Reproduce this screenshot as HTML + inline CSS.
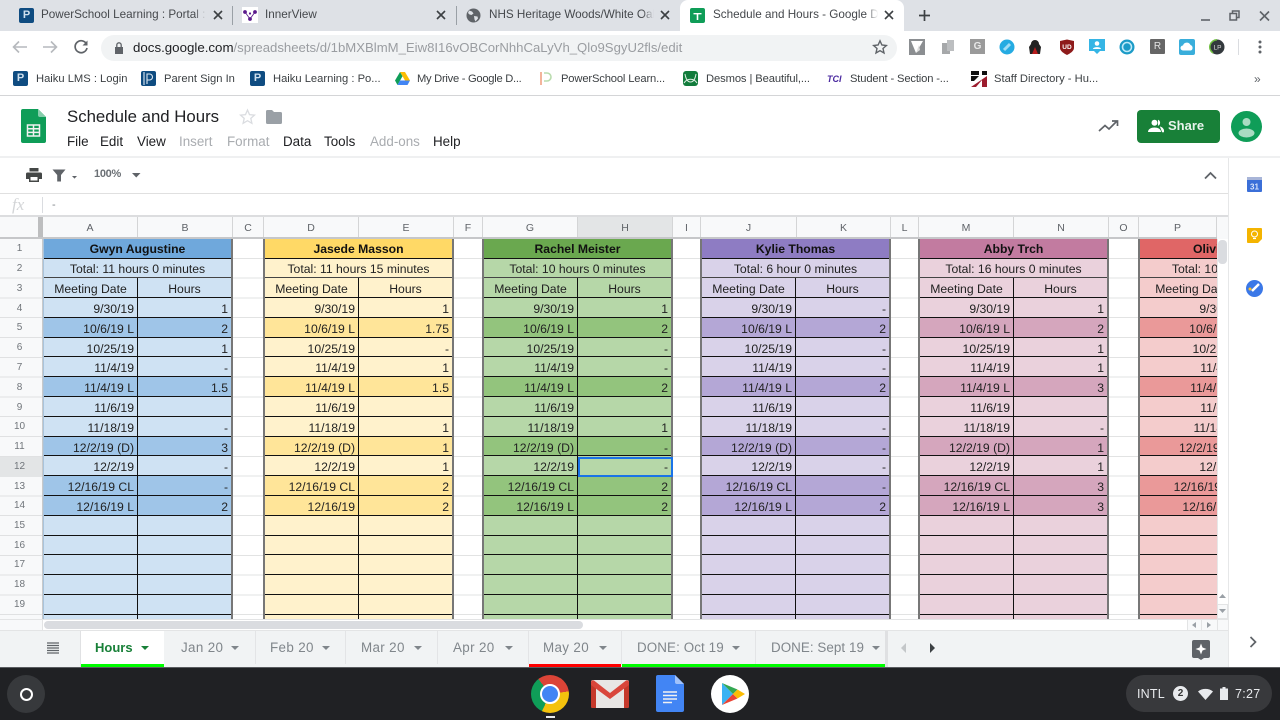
<!DOCTYPE html>
<html><head><meta charset="utf-8"><title>Schedule and Hours</title>
<style>
*{box-sizing:border-box}
html,body{margin:0;padding:0;width:1280px;height:720px;overflow:hidden;background:#fff;font-family:"Liberation Sans",sans-serif;color:#222}
.a{position:absolute}
.t{position:absolute;white-space:nowrap;line-height:16px}
svg{position:absolute;display:block}
.tab{font-size:11.7px;color:#45484c;top:7px;overflow:hidden;-webkit-mask-image:linear-gradient(to right,#000 93%,transparent)}
.x{position:absolute;top:7px;width:16px;height:16px}
.bm{font-size:11.2px;color:#3c4043;top:71px}
.mn{font-size:13.4px;top:134px;color:#202124}
.off{color:#a9acb0}
.ch{position:absolute;top:217px;height:22px;font-size:10.5px;line-height:23px;text-align:center;color:#5f6368;border-right:1px solid #d4d5d6;background:#f8f9fa}
.rh{position:absolute;left:0;width:39px;font-size:10px;line-height:20px;height:20px;text-align:center;color:#70757a}
.g{position:absolute;top:0;width:191px;display:grid;grid-template-columns:94px 93px;grid-template-rows:19.5px repeat(19,19.8px);font-size:12.2px;color:#222;border-left:2px solid #777;border-right:2px solid #777}
.g>span{display:block;padding:0 3px 0 0;line-height:22px;text-align:right;white-space:nowrap;overflow:hidden;border-bottom:1px solid #111;background:var(--l)}
.g>span:nth-child(odd){border-right:1px solid #111}
.g>span:nth-child(1){grid-column:span 2;background:var(--h);text-align:center;font-weight:bold;color:#111;border-right:0;padding:0;line-height:20px}
.g>span:nth-child(2){grid-column:span 2;text-align:center;padding:0;border-bottom:1px solid #444;line-height:21px}
.g>span:nth-child(3),.g>span:nth-child(4){text-align:center;padding:0}
.g>span:nth-child(3){border-right:1px solid #111}
.g>span:nth-child(7),.g>span:nth-child(8),.g>span:nth-child(13),.g>span:nth-child(14),.g>span:nth-child(19),.g>span:nth-child(20),.g>span:nth-child(23),.g>span:nth-child(24),.g>span:nth-child(25),.g>span:nth-child(26){background:var(--d)}
.g.p{width:204px;grid-template-columns:104px 96px}
.g.p>span:nth-child(1){text-align:left;padding-left:53px}
.st{position:absolute;top:640px;font-size:13.4px;line-height:16px;color:#80868b;letter-spacing:.35px;white-space:nowrap}
.ar{position:absolute;top:646px;width:0;height:0;border-left:4px solid transparent;border-right:4px solid transparent;border-top:4px solid #80868b}
.dv{position:absolute;top:631px;height:33px;width:1px;background:#e3e4e6}
.ext{position:absolute;top:39px;width:16px;height:16px}
</style></head><body>

<!-- Tab strip -->
<div class="a" style="left:0;top:0;width:1280px;height:31px;background:#dee1e6"></div>
<div class="a" style="left:680px;top:0;width:224px;height:32px;background:#fff;border-radius:8px 8px 0 0"></div>
<div class="a" style="left:232px;top:6px;width:1px;height:19px;background:#9aa0a6"></div>
<div class="a" style="left:456px;top:6px;width:1px;height:19px;background:#9aa0a6"></div>

<div class="a" style="left:19px;top:8px;width:15px;height:15px;background:#0f4c81;border-radius:2px;color:#cfe0ee;font:bold 11px/15px 'Liberation Sans',sans-serif;text-align:center">P</div>
<div class="t tab" style="left:41px;width:165px">PowerSchool Learning : Portal : Haiku</div>
<svg class="x" style="left:210px" viewBox="0 0 16 16"><path d="M4 4l8 8M12 4l-8 8" stroke="#3c4043" stroke-width="1.6"/></svg>

<div class="a" style="left:242px;top:7px;width:16px;height:16px;background:#fff"></div>
<svg style="left:242px;top:7px" width="16" height="16" viewBox="0 0 16 16"><g fill="#5b1a8c"><circle cx="3" cy="5" r="1.9"/><circle cx="13" cy="5" r="1.9"/><circle cx="8" cy="12" r="1.9"/><circle cx="8" cy="6.5" r="1.1"/></g><path d="M3 5l5 7 5-7" stroke="#5b1a8c" stroke-width=".8" fill="none"/></svg>
<div class="t tab" style="left:265px;width:160px">InnerView</div>
<svg class="x" style="left:433px" viewBox="0 0 16 16"><path d="M4 4l8 8M12 4l-8 8" stroke="#3c4043" stroke-width="1.6"/></svg>

<svg style="left:466px;top:8px" width="15" height="15" viewBox="0 0 15 15"><circle cx="7.5" cy="7.5" r="7" fill="#5f6368"/><path d="M3 2.5l3 1 1.5 2-2 1.5-2-.5-1.5-1.5zM8 8l3.5 .5 .5 2-2.5 3-1-2z" fill="#dee1e6"/></svg>
<div class="t tab" style="left:489px;width:165px">NHS Heritage Woods/White Oak</div>
<svg class="x" style="left:657px" viewBox="0 0 16 16"><path d="M4 4l8 8M12 4l-8 8" stroke="#3c4043" stroke-width="1.6"/></svg>

<div class="a" style="left:690px;top:8px;width:15px;height:15px;background:#0f9d58;border-radius:2px"></div>
<svg style="left:690px;top:8px" width="15" height="15" viewBox="0 0 15 15"><path d="M3.5 5h8v1.4h-8zM6.700 5h1.600v7H6.700z" fill="#fff"/></svg>
<div class="t tab" style="left:713px;width:165px">Schedule and Hours - Google Drive</div>
<svg class="x" style="left:881px" viewBox="0 0 16 16"><path d="M4 4l8 8M12 4l-8 8" stroke="#3c4043" stroke-width="1.6"/></svg>

<svg style="left:917px;top:8px" width="15" height="15" viewBox="0 0 15 15"><path d="M7.5 2v11M2 7.5h11" stroke="#3c4043" stroke-width="1.7"/></svg>
<svg style="left:1197px;top:8px" width="76" height="16" viewBox="0 0 76 16"><path d="M4 12h9" stroke="#5f6368" stroke-width="1.6"/><path d="M33 5.5h6.5v6.5H33z" fill="none" stroke="#5f6368" stroke-width="1.5"/><path d="M35.5 5V3h6.5v6.5h-2" fill="none" stroke="#5f6368" stroke-width="1.5"/><path d="M63 3.5l9 9M72 3.5l-9 9" stroke="#5f6368" stroke-width="1.6"/></svg>

<!-- Address bar -->
<svg style="left:10px;top:38px" width="82" height="18" viewBox="0 0 82 18"><path d="M17 9H4M9 3.5L3.5 9 9 14.5" fill="none" stroke="#b6b9bd" stroke-width="1.6"/><path d="M33 9h13M41 3.5L46.500 9 41 14.500" fill="none" stroke="#b6b9bd" stroke-width="1.600"/><path d="M76.500 6A6 6 0 1 0 77 10" fill="none" stroke="#5f6368" stroke-width="1.700"/><path d="M77.500 2.500v5h-5z" fill="#5f6368"/></svg>
<div class="a" style="left:101px;top:35px;width:796px;height:26px;background:#f1f3f4;border-radius:13px"></div>
<svg style="left:113px;top:41px" width="12" height="14" viewBox="0 0 12 14"><path d="M2 6h8v7H2z" fill="#5f6368"/><path d="M3.800 6V4a2.200 2.200 0 0 1 4.400 0v2" fill="none" stroke="#5f6368" stroke-width="1.300"/></svg>
<div class="t" style="left:133px;top:40px;font-size:13.300px;color:#9a9da1"><span style="color:#202124">docs.google.com</span><span style="font-size:13.150px">/spreadsheets/d/1bMXBlmM_Eiw8I16vOBCorNhhCaLyVh_Qlo9SgyU2fls/edit</span></div>
<svg style="left:872px;top:39px" width="16" height="16" viewBox="0 0 16 16"><path d="M8 1.800l1.900 4.200 4.500.5-3.400 3 1 4.500L8 11.700 4 14l1-4.500-3.400-3 4.500-.5z" fill="none" stroke="#5f6368" stroke-width="1.400"/></svg>

<!-- extensions -->
<svg class="ext" style="left:909px" viewBox="0 0 16 16"><path d="M0 0h16v16H0z" fill="#8b8e91"/><path d="M2 2h12L7 14z" fill="#fff"/><path d="M7 14l3-8 1 5z" fill="#ddd"/></svg>
<svg class="ext" style="left:940px" viewBox="0 0 16 16"><path d="M2 4h8v11H2z" fill="#a6a8aa"/><path d="M7 1h7v11H7z" fill="#bcbec0"/></svg>
<div class="a" style="left:970px;top:39px;width:15px;height:15px;background:#9a9a9a;color:#e8e8e8;font:bold 10px/15px 'Liberation Sans',sans-serif;text-align:center">G</div>
<svg class="ext" style="left:999px" viewBox="0 0 16 16"><circle cx="8" cy="8" r="7.500" fill="#25abe2"/><path d="M5 11l6-6" stroke="#9fdcf5" stroke-width="3"/></svg>
<svg class="ext" style="left:1027px" viewBox="0 0 16 16"><path d="M4 5a4 4 0 0 1 8 0l2 3-1 7H3L2 8z" fill="#222"/><path d="M8 8l3 7H5z" fill="#b71c1c"/></svg>
<svg class="ext" style="left:1059px" viewBox="0 0 16 16"><path d="M1 2l7-1.500L15 2v7c0 3-4 5.500-7 7-3-1.500-7-4-7-7z" fill="#8e1b1b"/><text x="8" y="10" font-size="6.500" font-weight="bold" text-anchor="middle" fill="#fff" font-family="Liberation Sans">UD</text></svg>
<svg class="ext" style="left:1089px" viewBox="0 0 16 16"><path d="M0 0h16v12h-5l-3 3-3-3H0z" fill="#35b5e5"/><circle cx="8" cy="4.500" r="2.300" fill="#fff"/><path d="M4 10c0-2.500 8-2.500 8 0z" fill="#fff"/></svg>
<svg class="ext" style="left:1119px" viewBox="0 0 16 16"><circle cx="8" cy="8" r="7.500" fill="#1c9bc7"/><circle cx="8" cy="8" r="4.500" fill="none" stroke="#bfeaf8" stroke-width="1.600"/></svg>
<div class="a" style="left:1150px;top:39px;width:15px;height:15px;background:#666;color:#e4e4e4;font:10px/15px 'Liberation Sans',sans-serif;text-align:center;border-radius:1px">R</div>
<svg class="ext" style="left:1179px" viewBox="0 0 16 16"><rect width="16" height="16" rx="2" fill="#39aedb"/><path d="M4 11.500a2.500 2.500 0 0 1 0-5 4 4 0 0 1 7.500-.5 3 3 0 0 1 .5 5.500z" fill="#fff"/></svg>
<svg class="ext" style="left:1209px" viewBox="0 0 16 16"><circle cx="8" cy="8" r="7.500" fill="#33393d"/><path d="M8 .8A7.200 7.200 0 0 0 4 14" fill="none" stroke="#6fbf3f" stroke-width="1.500"/><text x="8.500" y="10.500" font-size="6.500" text-anchor="middle" fill="#ddd" font-family="Liberation Sans">LP</text></svg>
<div class="a" style="left:1238px;top:39px;width:1px;height:16px;background:#dadce0"></div>
<svg style="left:1258px;top:40px" width="4" height="14" viewBox="0 0 4 14"><g fill="#5f6368"><circle cx="2" cy="2" r="1.500"/><circle cx="2" cy="7" r="1.500"/><circle cx="2" cy="12" r="1.500"/></g></svg>

<!-- Bookmarks -->
<div class="a" style="left:13px;top:71px;width:15px;height:15px;background:#0f4c81;border-radius:2px;color:#cfe0ee;font:bold 11px/15px 'Liberation Sans',sans-serif;text-align:center">P</div>
<div class="t bm" style="left:36px">Haiku LMS : Login</div>
<div class="a" style="left:141px;top:71px;width:15px;height:15px;background:#0f4c81;border-radius:2px"></div>
<svg style="left:141px;top:71px" width="15" height="15" viewBox="0 0 15 15"><path d="M3 1v13M6 3h2.500a3 3 0 0 1 0 6H6zM6 3v10" fill="none" stroke="#dfeaf3" stroke-width="1.100"/></svg>
<div class="t bm" style="left:164px">Parent Sign In</div>
<div class="a" style="left:250px;top:71px;width:15px;height:15px;background:#0f4c81;border-radius:2px;color:#cfe0ee;font:bold 11px/15px 'Liberation Sans',sans-serif;text-align:center">P</div>
<div class="t bm" style="left:273px">Haiku Learning : Po...</div>
<svg style="left:395px;top:72px" width="15" height="13" viewBox="0 0 15 13"><path d="M5 0h5l5 8.500h-5z" fill="#fbbc04"/><path d="M5 0l2.500 4.300L2.500 13 0 8.500z" fill="#0f9d58"/><path d="M2.500 13l2.500-4.500h10L12.500 13z" fill="#4285f4"/></svg>
<div class="t bm" style="left:417px;letter-spacing:-.28px">My Drive - Google D...</div>
<svg style="left:539px;top:71px" width="14" height="15" viewBox="0 0 14 15"><path d="M2 1v13" stroke="#f3b49c" stroke-width="2"/><path d="M5 2h3a4 4 0 0 1 0 8H5" fill="none" stroke="#b9dcae" stroke-width="1.600"/></svg>
<div class="t bm" style="left:561px;letter-spacing:-.15px">PowerSchool Learn...</div>
<svg style="left:683px;top:71px" width="15" height="15" viewBox="0 0 15 15"><rect width="15" height="15" rx="3" fill="#127c3c"/><path d="M2 3c1 6 3 8 5.500 8S12 9 13 3M1 12c3-5 10-5 13 0" fill="none" stroke="#dff0e3" stroke-width="1"/></svg>
<div class="t bm" style="left:706px;letter-spacing:-.1px">Desmos | Beautiful,...</div>
<div class="t" style="left:827px;top:71px;font:italic bold 9px/16px 'Liberation Sans',sans-serif;color:#4b2aa0">TCI</div>
<div class="t bm" style="left:850px;letter-spacing:-.15px">Student - Section -...</div>
<svg style="left:971px;top:71px" width="16" height="16" viewBox="0 0 16 16"><path d="M0 0h8v4H0zM11 0h5v4h-5z" fill="#111"/><path d="M16 5v11h-5V9L5 16H0z" fill="#9c1c2e"/><path d="M0 5h8L3 10H0z" fill="#111"/></svg>
<div class="t bm" style="left:994px">Staff Directory - Hu...</div>
<div class="t" style="left:1254px;top:71px;font-size:12px;color:#5f6368">»</div>
<div class="a" style="left:0;top:95px;width:1280px;height:1px;background:#d4d5d7"></div>

<!-- Docs header -->
<svg style="left:21px;top:109px" width="25" height="34" viewBox="0 0 25 34"><path d="M2 0h15l8 8v24a2 2 0 0 1-2 2H2a2 2 0 0 1-2-2V2a2 2 0 0 1 2-2z" fill="#0f9d58"/><path d="M17 0l8 8h-6a2 2 0 0 1-2-2z" fill="#87ceac"/><path d="M6.500 16h12v11h-12zM6.500 19.700h12M6.500 23.400h12M12.500 16v11" fill="none" stroke="#f1f1f1" stroke-width="1.500"/></svg>
<div class="t" style="left:67px;top:108px;font-size:16.800px;line-height:18px;color:#202124">Schedule and Hours</div>
<svg style="left:239px;top:108px" width="17" height="17" viewBox="0 0 17 17"><path d="M8.500 2l2 4.600 5 .5-3.700 3.300 1.100 4.900-4.400-2.600-4.400 2.600 1.100-4.900L1.500 7.100l5-.5z" fill="none" stroke="#dadce0" stroke-width="1.300"/></svg>
<svg style="left:266px;top:110px" width="16" height="14" viewBox="0 0 16 14"><path d="M0 1.500A1.500 1.500 0 0 1 1.500 0h4.500l2 2h6.500A1.500 1.500 0 0 1 16 3.500V12.500a1.500 1.500 0 0 1-1.500 1.500h-13A1.500 1.500 0 0 1 0 12.500z" fill="#9aa0a6"/></svg>
<div class="t mn" style="left:67px">File</div>
<div class="t mn" style="left:100px">Edit</div>
<div class="t mn" style="left:137px">View</div>
<div class="t mn off" style="left:179px">Insert</div>
<div class="t mn off" style="left:227px">Format</div>
<div class="t mn" style="left:283px">Data</div>
<div class="t mn" style="left:324px">Tools</div>
<div class="t mn off" style="left:370px">Add-ons</div>
<div class="t mn" style="left:433px">Help</div>

<svg style="left:1098px;top:119px" width="21" height="15" viewBox="0 0 21 15"><path d="M1 12l6-5.500 4 3.500 8-8M14 2h5.500v5" fill="none" stroke="#5f6368" stroke-width="1.700"/></svg>
<div class="a" style="left:1137px;top:110px;width:83px;height:33px;background:#188038;border-radius:4px"></div>
<svg style="left:1148px;top:119px" width="16" height="14" viewBox="0 0 16 14"><circle cx="6.500" cy="3.700" r="3" fill="#fff"/><path d="M0 13c0-6 13-6 13 0z" fill="#fff"/><path d="M10 1a3 3 0 0 1 0 5.500M12 7.800c2 .5 4 2 4 5.200h-2" fill="#fff" stroke="#fff" stroke-width=".6"/></svg>
<div class="t" style="left:1168px;top:118px;font-size:13px;font-weight:bold;color:#e8f3ec">Share</div>
<svg style="left:1231px;top:111px" width="31" height="31" viewBox="0 0 31 31"><circle cx="15.500" cy="15.500" r="15.500" fill="#0f9d58"/><circle cx="15.500" cy="11" r="4" fill="#a9dcc2"/><ellipse cx="15.500" cy="22" rx="8" ry="4.500" fill="#a9dcc2"/></svg>

<div class="a" style="left:0;top:156px;width:1280px;height:2px;background:#eff0f1"></div>

<!-- Toolbar -->
<svg style="left:26px;top:168px" width="16" height="14" viewBox="0 0 16 14"><path d="M3.500 0h9v3.500h-9zM1.500 4.500h13A1.500 1.500 0 0 1 16 6v5h-3v3H3v-3H0V6a1.500 1.500 0 0 1 1.500-1.500z" fill="#444746"/><path d="M4.500 9h7v3.500h-7z" fill="#fff"/></svg>
<svg style="left:52px;top:169px" width="28" height="13" viewBox="0 0 28 13"><path d="M.5 .5h13L9 6v6.500H5.200V6z" fill="#5f6368"/><path d="M20 7h5l-2.500 2.600z" fill="#5f6368"/></svg>
<div class="t" style="left:94px;top:166px;font-size:11px;font-weight:bold;color:#6b7075;letter-spacing:-.3px">100%</div>
<svg style="left:132px;top:173px" width="9" height="5" viewBox="0 0 9 5"><path d="M0 0h8.500L4.250 4.500z" fill="#5f6368"/></svg>
<svg style="left:1204px;top:171px" width="13" height="9" viewBox="0 0 13 9"><path d="M1 7.500l5.500-5.500 5.500 5.500" fill="none" stroke="#5f6368" stroke-width="1.800"/></svg>

<div class="a" style="left:0;top:193px;width:1228px;height:1px;background:#e0e0e0"></div>
<div class="t" style="left:12px;top:197px;font:italic 17px/16px 'Liberation Serif',serif;color:#d3d5d7">fx</div>
<div class="a" style="left:42px;top:197px;width:1px;height:16px;background:#dadce0"></div>
<div class="t" style="left:52px;top:197px;font-size:11px;color:#80868b">-</div>
<div class="a" style="left:0;top:215px;width:1228px;height:2px;background:#dcdddf"></div>

<!-- Column headers -->
<div class="a" style="left:0;top:217px;width:1228px;height:22px;background:#f8f9fa"></div>
<div class="ch" style="left:43px;width:95px">A</div>
<div class="ch" style="left:138px;width:95px">B</div>
<div class="ch" style="left:233px;width:31px">C</div>
<div class="ch" style="left:264px;width:95px">D</div>
<div class="ch" style="left:359px;width:95px">E</div>
<div class="ch" style="left:454px;width:29px">F</div>
<div class="ch" style="left:483px;width:95px">G</div>
<div class="ch" style="left:578px;width:95px;background:#e3e5e6">H</div>
<div class="ch" style="left:673px;width:28px">I</div>
<div class="ch" style="left:701px;width:96px">J</div>
<div class="ch" style="left:797px;width:94px">K</div>
<div class="ch" style="left:891px;width:28px">L</div>
<div class="ch" style="left:919px;width:95px">M</div>
<div class="ch" style="left:1014px;width:95px">N</div>
<div class="ch" style="left:1109px;width:30px">O</div>
<div class="ch" style="left:1139px;width:78px;border-right:1px solid #d4d5d6">P</div>
<div class="a" style="left:38px;top:217px;width:5px;height:22px;background:#bdbebf"></div>
<div class="a" style="left:0;top:237px;width:1217px;height:2px;background:#c6c7c9"></div>

<!-- Row headers -->
<div class="a" style="left:0;top:239px;width:43px;height:380px;background:repeating-linear-gradient(to bottom,#f8f9fa 0,#f8f9fa 18.800px,#e0e1e2 18.800px,#e0e1e2 19.800px);border-right:1px solid #c8c9ca"></div>
<div class="a" style="left:0;top:457px;width:42px;height:19.800px;background:#e3e5e6"></div>
<div class="rh" style="top:239px">1</div>
<div class="rh" style="top:259px">2</div>
<div class="rh" style="top:279px">3</div>
<div class="rh" style="top:299px">4</div>
<div class="rh" style="top:318px">5</div>
<div class="rh" style="top:338px">6</div>
<div class="rh" style="top:358px">7</div>
<div class="rh" style="top:378px">8</div>
<div class="rh" style="top:398px">9</div>
<div class="rh" style="top:417px">10</div>
<div class="rh" style="top:437px">11</div>
<div class="rh" style="top:457px">12</div>
<div class="rh" style="top:477px">13</div>
<div class="rh" style="top:496px">14</div>
<div class="rh" style="top:516px">15</div>
<div class="rh" style="top:536px">16</div>
<div class="rh" style="top:555px">17</div>
<div class="rh" style="top:575px">18</div>
<div class="rh" style="top:595px">19</div>

<!-- Grid -->
<div class="a" style="left:43px;top:239px;width:1174px;height:380px;overflow:hidden;background:repeating-linear-gradient(to bottom,#fff 0,#fff 18.800px,#e2e3e3 18.800px,#e2e3e3 19.800px)">
<div class="g" style="left:-1px;border-left-color:#a9c4dc;--h:#6fa8dc;--l:#cfe2f3;--d:#9fc5e8">
<span>Gwyn Augustine</span><span>Total: 11 hours 0 minutes</span><span>Meeting Date</span><span>Hours</span>
<span>9/30/19</span><span>1</span><span>10/6/19 L</span><span>2</span><span>10/25/19</span><span>1</span><span>11/4/19</span><span>-</span><span>11/4/19 L</span><span>1.5</span><span>11/6/19</span><span></span><span>11/18/19</span><span>-</span><span>12/2/19 (D)</span><span>3</span><span>12/2/19</span><span>-</span><span>12/16/19 CL</span><span>-</span><span>12/16/19 L</span><span>2</span>
<span></span><span></span><span></span><span></span><span></span><span></span><span></span><span></span><span></span><span></span><span></span><span></span>
</div>
<div class="g" style="left:220px;--h:#ffd966;--l:#fff2cc;--d:#ffe599">
<span>Jasede Masson</span><span>Total: 11 hours 15 minutes</span><span>Meeting Date</span><span>Hours</span>
<span>9/30/19</span><span>1</span><span>10/6/19 L</span><span>1.75</span><span>10/25/19</span><span>-</span><span>11/4/19</span><span>1</span><span>11/4/19 L</span><span>1.5</span><span>11/6/19</span><span></span><span>11/18/19</span><span>1</span><span>12/2/19 (D)</span><span>1</span><span>12/2/19</span><span>1</span><span>12/16/19 CL</span><span>2</span><span>12/16/19</span><span>2</span>
<span></span><span></span><span></span><span></span><span></span><span></span><span></span><span></span><span></span><span></span><span></span><span></span>
</div>
<div class="g" style="left:439px;--h:#6aa84f;--l:#b6d7a8;--d:#93c47d">
<span>Rachel Meister</span><span>Total: 10 hours 0 minutes</span><span>Meeting Date</span><span>Hours</span>
<span>9/30/19</span><span>1</span><span>10/6/19 L</span><span>2</span><span>10/25/19</span><span>-</span><span>11/4/19</span><span>-</span><span>11/4/19 L</span><span>2</span><span>11/6/19</span><span></span><span>11/18/19</span><span>1</span><span>12/2/19 (D)</span><span>-</span><span>12/2/19</span><span>-</span><span>12/16/19 CL</span><span>2</span><span>12/16/19 L</span><span>2</span>
<span></span><span></span><span></span><span></span><span></span><span></span><span></span><span></span><span></span><span></span><span></span><span></span>
</div>
<div class="g" style="left:657px;--h:#8e7cc3;--l:#d9d2e9;--d:#b4a7d6">
<span>Kylie Thomas</span><span>Total: 6 hour 0 minutes</span><span>Meeting Date</span><span>Hours</span>
<span>9/30/19</span><span>-</span><span>10/6/19 L</span><span>2</span><span>10/25/19</span><span>-</span><span>11/4/19</span><span>-</span><span>11/4/19 L</span><span>2</span><span>11/6/19</span><span></span><span>11/18/19</span><span>-</span><span>12/2/19 (D)</span><span>-</span><span>12/2/19</span><span>-</span><span>12/16/19 CL</span><span>-</span><span>12/16/19 L</span><span>2</span>
<span></span><span></span><span></span><span></span><span></span><span></span><span></span><span></span><span></span><span></span><span></span><span></span>
</div>
<div class="g" style="left:875px;--h:#c27ba0;--l:#ead1dc;--d:#d5a6bd">
<span>Abby Trch</span><span>Total: 16 hours 0 minutes</span><span>Meeting Date</span><span>Hours</span>
<span>9/30/19</span><span>1</span><span>10/6/19 L</span><span>2</span><span>10/25/19</span><span>1</span><span>11/4/19</span><span>1</span><span>11/4/19 L</span><span>3</span><span>11/6/19</span><span></span><span>11/18/19</span><span>-</span><span>12/2/19 (D)</span><span>1</span><span>12/2/19</span><span>1</span><span>12/16/19 CL</span><span>3</span><span>12/16/19 L</span><span>3</span>
<span></span><span></span><span></span><span></span><span></span><span></span><span></span><span></span><span></span><span></span><span></span><span></span>
</div>
<div class="g p" style="left:1095px;--h:#e06666;--l:#f4cccc;--d:#ea9999">
<span>Olivia</span><span>Total: 10 hours 0 minutes</span><span>Meeting Date</span><span>Hours</span>
<span>9/30/19</span><span>1</span><span>10/6/19 L</span><span>2</span><span>10/25/19</span><span>1</span><span>11/4/19</span><span>1</span><span>11/4/19 L</span><span>2</span><span>11/6/19</span><span></span><span>11/18/19</span><span>1</span><span>12/2/19 (D)</span><span>1</span><span>12/2/19</span><span>1</span><span>12/16/19 CL</span><span>2</span><span>12/16/19 L</span><span>2</span>
<span></span><span></span><span></span><span></span><span></span><span></span><span></span><span></span><span></span><span></span><span></span><span></span>
</div>
</div>
<div class="a" style="left:577.500px;top:456.500px;width:95px;height:20.500px;border:2px solid #1a73e8"></div>

<!-- Vertical scrollbar -->
<div class="a" style="left:1217px;top:239px;width:11px;height:380px;background:#fff;border-left:1px solid #e6e7e8"></div>
<div class="a" style="left:1218px;top:240px;width:9px;height:24px;background:#dadce0;border-radius:4px"></div>
<div class="a" style="left:1217px;top:604px;width:11px;height:15px;background:#f8f9fa;border:1px solid #e3e4e5"></div>
<svg style="left:1219px;top:609px" width="7" height="5" viewBox="0 0 7 5"><path d="M0 0h7L3.500 4z" fill="#9aa0a6"/></svg>
<svg style="left:1219px;top:594px" width="7" height="5" viewBox="0 0 7 5"><path d="M0 4h7L3.500 0z" fill="#9aa0a6"/></svg>

<!-- Horizontal scrollbar -->
<div class="a" style="left:0;top:619px;width:1228px;height:11px;background:#fff;border-top:1px solid #e3e4e5"></div>
<div class="a" style="left:0;top:620px;width:43px;height:10px;background:#f8f9fa;border-right:1px solid #e3e4e5"></div>
<div class="a" style="left:44px;top:621px;width:539px;height:8px;background:#dadce0;border-radius:4px"></div>
<div class="a" style="left:1187px;top:620px;width:41px;height:10px;background:#f8f9fa;border-left:1px solid #e3e4e5"></div>
<div class="a" style="left:1201px;top:620px;width:1px;height:10px;background:#e3e4e5"></div>
<div class="a" style="left:1217px;top:620px;width:1px;height:10px;background:#e3e4e5"></div>
<svg style="left:1192px;top:622px" width="30" height="7" viewBox="0 0 30 7"><path d="M4 0v6L0 3zM15 0v6l4-3z" fill="#9aa0a6"/></svg>

<!-- Right panel -->
<div class="a" style="left:1228px;top:158px;width:1px;height:510px;background:#e6e7e8"></div>
<svg style="left:1247px;top:176px" width="15" height="16" viewBox="0 0 15 16"><rect y="1" width="15" height="15" rx="1" fill="#3b6fd8"/><rect y="1" width="15" height="3" fill="#a8b5d8"/><text x="7.500" y="13.500" font-size="8" font-weight="bold" text-anchor="middle" fill="#d8e4fb" font-family="Liberation Sans">31</text></svg>
<svg style="left:1247px;top:228px" width="15" height="15" viewBox="0 0 15 15"><path d="M1 0h13a1 1 0 0 1 1 1v10l-4 4H1a1 1 0 0 1-1-1V1a1 1 0 0 1 1-1z" fill="#f4b400"/><circle cx="7.500" cy="6" r="3" fill="none" stroke="#fff" stroke-width="1"/><path d="M6 10.500h3" stroke="#fff" stroke-width="1.200"/></svg>
<svg style="left:1246px;top:280px" width="17" height="17" viewBox="0 0 17 17"><circle cx="8.500" cy="8.500" r="8.500" fill="#3b78e7"/><path d="M6 11l7-7" stroke="#fff" stroke-width="2.500"/><circle cx="4" cy="9" r="1.500" fill="#fbc02d"/></svg>
<svg style="left:1249px;top:636px" width="8" height="12" viewBox="0 0 8 12"><path d="M1.500 1l5 5-5 5" fill="none" stroke="#5f6368" stroke-width="1.700"/></svg>

<!-- Sheet tabs -->
<div class="a" style="left:0;top:630px;width:1228px;height:37px;background:#f1f3f4;border-top:1px solid #e3e4e5"></div>
<div class="a" style="left:885px;top:631px;width:3px;height:36px;background:#dfe0e2"></div>
<svg style="left:46px;top:642px" width="14" height="13" viewBox="0 0 14 13"><path d="M1 1h12M1 3.500h12M1 6h12M1 8.500h12M1 11h12" stroke="#5f6368" stroke-width="1.200"/></svg>
<div class="a" style="left:80px;top:631px;width:1px;height:36px;background:#e0e1e3"></div>
<div class="a" style="left:81px;top:631px;width:83px;height:33px;background:#fff"></div>
<div class="a" style="left:81px;top:663.500px;width:83px;height:3.500px;background:#00ff00"></div>
<div class="a" style="left:529px;top:663.500px;width:92px;height:3.500px;background:#ff0000"></div>
<div class="a" style="left:622px;top:663.500px;width:133.500px;height:3.500px;background:#00ff00"></div>
<div class="a" style="left:756px;top:663.500px;width:129px;height:3.500px;background:#00ff00"></div>
<div class="dv" style="left:255px"></div><div class="dv" style="left:345px"></div><div class="dv" style="left:437px"></div><div class="dv" style="left:528px"></div><div class="dv" style="left:621px"></div><div class="dv" style="left:755px"></div>
<div class="st" style="left:95px;color:#188038;font-weight:bold;letter-spacing:0;font-size:13px">Hours</div><div class="ar" style="left:141px;border-top-color:#188038"></div>
<div class="st" style="left:181px">Jan 20</div><div class="ar" style="left:231px"></div>
<div class="st" style="left:270px">Feb 20</div><div class="ar" style="left:322px"></div>
<div class="st" style="left:361px">Mar 20</div><div class="ar" style="left:414px"></div>
<div class="st" style="left:453px">Apr 20</div><div class="ar" style="left:505px"></div>
<div class="st" style="left:543px">May 20</div><div class="ar" style="left:599px"></div>
<div class="st" style="left:637px;letter-spacing:.1px">DONE: Oct 19</div><div class="ar" style="left:732px"></div>
<div class="st" style="left:771px;letter-spacing:.05px">DONE: Sept 19</div><div class="ar" style="left:872px"></div>
<svg style="left:900px;top:642px" width="36" height="12" viewBox="0 0 36 12"><path d="M6 1v10L1 6z" fill="#c4c7c9"/><path d="M30 1v10l5-5z" fill="#3c4043"/></svg>
<svg style="left:1192px;top:640px" width="18" height="20" viewBox="0 0 18 20"><path d="M2 0h14a2 2 0 0 1 2 2v14a2 2 0 0 1-2 2h-4l-3 2-3-2H2a2 2 0 0 1-2-2V2a2 2 0 0 1 2-2z" fill="#5f6368"/><path d="M9 3.500l1.500 4 4 1.500-4 1.500-1.500 4-1.500-4-4-1.500 4-1.500z" fill="#fff"/></svg>

<!-- Shelf -->
<div class="a" style="left:0;top:667px;width:1280px;height:53px;background:#202124;border-top:1px solid #5a5c60"></div>
<div class="a" style="left:7px;top:675px;width:38px;height:38px;border-radius:50%;background:#37393c"></div>
<div class="a" style="left:20px;top:688px;width:13px;height:13px;border-radius:50%;border:2px solid #fff"></div>

<div class="a" style="left:531px;top:675px;width:38px;height:38px;border-radius:50%;background:conic-gradient(#db4437 0 82deg,#f4c20d 82deg 205deg,#0f9d58 205deg 322deg,#db4437 322deg)"></div>
<div class="a" style="left:540px;top:684px;width:20px;height:20px;border-radius:50%;background:#4285f4;border:2px solid #fff"></div>
<div class="a" style="left:546px;top:716px;width:9px;height:2px;background:#e8eaed"></div>

<svg style="left:591px;top:680px" width="38" height="28" viewBox="0 0 38 28"><rect width="38" height="28" rx="2" fill="#e8e6e4"/><path d="M5 28H1.500A1.500 1.500 0 0 1 0 26.500V2l5 3zM33 28h3.500a1.500 1.500 0 0 0 1.500-1.500V2l-5 3z" fill="#c5392b"/><path d="M0 2a2 2 0 0 1 3-1.500L19 13 35 .5A2 2 0 0 1 38 2v3L19 19 0 5z" fill="#d9463b"/></svg>

<svg style="left:656px;top:675px" width="28" height="37" viewBox="0 0 28 37"><path d="M2 0h17l9 9v26a2 2 0 0 1-2 2H2a2 2 0 0 1-2-2V2a2 2 0 0 1 2-2z" fill="#4285f4"/><path d="M19 0l9 9h-7a2 2 0 0 1-2-2z" fill="#a1c2fa"/><path d="M7 17h14M7 20.500h14M7 24h14M7 27.500h9" stroke="#f1f1f1" stroke-width="1.400"/></svg>

<div class="a" style="left:711px;top:675px;width:38px;height:38px;border-radius:50%;background:#fff"></div>
<svg style="left:721px;top:682px" width="24" height="24" viewBox="0 0 24 24"><path d="M1 1l11 11L1 23z" fill="#3bb3f3"/><path d="M1 1l11 11 4.500-4.500z" fill="#34a853"/><path d="M1 23l11-11 4.500 4.500z" fill="#ea4335"/><path d="M16.500 7.500L12 12l4.500 4.500L24 12z" fill="#fbbc04"/></svg>

<div class="a" style="left:1126px;top:675px;width:146px;height:37px;border-radius:19px;background:#38393c"></div>
<div class="t" style="left:1137px;top:686px;font-size:12.500px;color:#e8eaed;letter-spacing:.2px">INTL</div>
<div class="a" style="left:1173px;top:686px;width:15px;height:15px;border-radius:50%;background:#e8eaed;color:#333;font:bold 10px/15px 'Liberation Sans',sans-serif;text-align:center">2</div>
<svg style="left:1198px;top:688px" width="15" height="12" viewBox="0 0 15 12"><path d="M0 3.500C4 0 11 0 15 3.500L7.500 12z" fill="#e8eaed"/></svg>
<svg style="left:1220px;top:687px" width="8" height="13" viewBox="0 0 8 13"><path d="M2.500 0h3v1.500H8V13H0V1.500h2.500z" fill="#e8eaed"/></svg>
<div class="t" style="left:1235px;top:686px;font-size:12.500px;color:#e8eaed;letter-spacing:.3px">7:27</div>

</body></html>
